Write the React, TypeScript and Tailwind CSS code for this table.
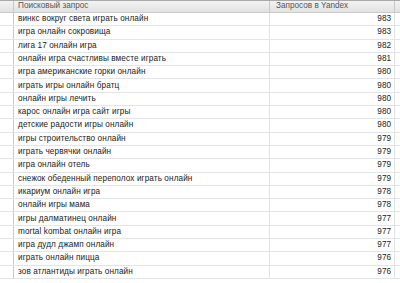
import React from 'react';

const rows: [string, number][] = [
    ['винкс вокруг света играть онлайн', 983],
    ['игра онлайн сокровища', 983],
    ['лига 17 онлайн игра', 982],
    ['онлайн игра счастливы вместе играть', 981],
    ['игра американские горки онлайн', 980],
    ['играть игры онлайн братц', 980],
    ['онлайн игры лечить', 980],
    ['карос онлайн игра сайт игры', 980],
    ['детские радости игры онлайн', 980],
    ['игры строительство онлайн', 979],
    ['играть червячки онлайн', 979],
    ['игра онлайн отель', 979],
    ['снежок обеденный переполох играть онлайн', 979],
    ['икариум онлайн игра', 978],
    ['онлайн игры мама', 978],
    ['игры далматинец онлайн', 977],
    ['mortal kombat онлайн игра', 977],
    ['игра дудл джамп онлайн', 977],
    ['играть онлайн пицца', 976],
    ['зов атлантиды играть онлайн', 976],
];

const App: React.FC = () => {
    return (
        <div
            className="w-[400px] h-[283px] overflow-hidden bg-white text-[8.2px] leading-none"
            style={{ fontFamily: '"Liberation Sans", Arial, sans-serif' }}
        >
            {/* header */}
            <div className="flex h-[13px] border-t border-[#a9a9a9] border-b border-b-[#c9c9c9] bg-gradient-to-b from-[#f3f3f3] to-[#e2e2e2] text-[#555]">
                <div className="w-[14px] border-r border-[#c8c8c8]" />
                <div className="w-[256px] border-r border-[#c8c8c8] pl-[4px] flex items-center">
                    Поисковый запрос
                </div>
                <div className="w-[125px] border-r border-[#c8c8c8] pl-[6px] flex items-center">
                    Запросов в Yandex
                </div>
                <div className="flex-1" />
            </div>

            {/* body */}
            {rows.map(([q, n], i) => (
                <div key={i} className="flex h-[13.3px] border-b border-[#e1e4e8] text-[#222]">
                    <div className="w-[14px] border-r border-[#c8c8c8]" />
                    <div className="w-[256px] border-r border-[#dfe3e8] pl-[4px] flex items-center tracking-[0.1px]">
                        {q}
                    </div>
                    <div className="w-[125px] border-r border-[#dfe3e8] pr-[3px] flex items-center justify-end">
                        {n}
                    </div>
                    <div className="flex-1" />
                </div>
            ))}
        </div>
    );
};

export default App;
